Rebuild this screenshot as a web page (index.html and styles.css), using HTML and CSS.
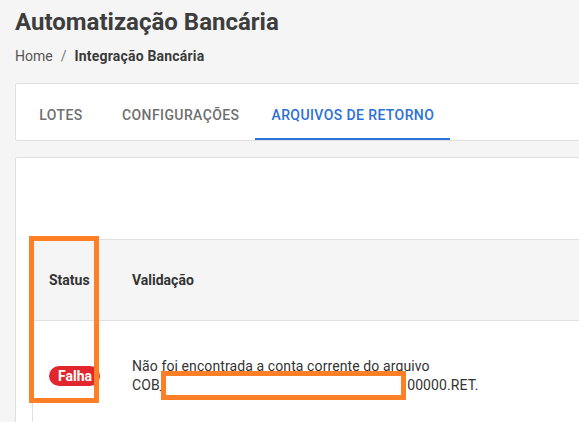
FILE: index.html
```html
<!DOCTYPE html>
<html lang="pt-BR">
<head>
<meta charset="utf-8">
<title>Automatização Bancária</title>
<link rel="stylesheet" href="styles.css">
</head>
<body>
<div class="page">
  <h1 class="title">Automatização Bancária</h1>
  <nav class="breadcrumb">
    <span class="crumb">Home</span>
    <span class="sep">/</span>
    <span class="crumb current">Integração Bancária</span>
  </nav>
  <div class="card tabs">
    <div class="tab">LOTES</div>
    <div class="tab">CONFIGURAÇÕES</div>
    <div class="tab active">ARQUIVOS DE RETORNO</div>
  </div>
  <div class="card content">
    <div class="toolbar"></div>
    <table class="grid">
      <thead>
        <tr>
          <th class="col-status">Status</th>
          <th>Validação</th>
        </tr>
      </thead>
      <tbody>
        <tr>
          <td class="col-status"><span class="badge">Falha</span></td>
          <td class="msg">Não foi encontrada a conta corrente do arquivo<br>COB_<span class="redact"></span>00000.RET.</td>
        </tr>
      </tbody>
    </table>
    <div class="mark-status"></div>
  </div>
</div>
</body>
</html>
```

FILE: styles.css
```css
html, body {
  margin: 0;
  padding: 0;
}
body {
  background: #f5f5f5;
  font-family: Roboto, "Noto Sans", "Liberation Sans", sans-serif;
  color: #333;
  overflow: hidden;
}
.page {
  width: 1000px;
  padding: 6px 15px 0;
}
.title {
  margin: 0;
  font-size: 24px;
  line-height: 32px;
  font-weight: 700;
  color: #3d3d3d;
}
.breadcrumb {
  margin-top: 8px;
  font-size: 14px;
  line-height: 20px;
  display: flex;
  gap: 8px;
}
.crumb { color: #555; }
.sep { color: #777; }
.crumb.current { font-weight: 700; color: #3a3a3a; letter-spacing: 0.2px; }

.card {
  background: #fff;
  border: 1px solid #e0e0e0;
  border-radius: 2px;
}
.tabs {
  margin-top: 17px;
  display: flex;
}
.tab {
  position: relative;
  min-width: 90px;
  box-sizing: border-box;
  padding: 21px 16px 15px;
  text-align: center;
  font-size: 14px;
  line-height: 20px;
  font-weight: 500;
  letter-spacing: 0.4px;
  color: #6f6f6f;
}
.tab.active { color: #2b70d6; }
.tab.active::after {
  content: "";
  position: absolute;
  left: 0;
  right: 0;
  bottom: 0;
  height: 2px;
  background: #2b72dc;
}
.content {
  position: relative;
  margin-top: 16px;
  padding: 16px;
  height: 400px;
}
.toolbar { height: 65px; }
.grid {
  border-collapse: collapse;
  width: 100%;
  border-left: 1px solid #e0e0e0;
  border-top: 1px solid #e0e0e0;
  font-size: 14px;
}
.grid th {
  background: #f5f5f5;
  height: 80px;
  padding: 0 16px;
  text-align: left;
  font-weight: 700;
  color: #333;
  border-bottom: 1px solid #e0e0e0;
}
.grid td {
  padding: 36px 16px;
  vertical-align: middle;
  line-height: 18.5px;
}
.col-status { width: 50px; }
.badge {
  display: inline-block;
  background: #e1262d;
  color: #fff;
  font-weight: 700;
  font-size: 14px;
  line-height: 20px;
  padding: 0 8px 0 9px;
  border-radius: 10px;
}
.msg { color: #333; font-size: 14px; letter-spacing: 0.1px; }
.redact {
  display: inline-block;
  position: relative;
  width: 241px;
  height: 14px;
}
.redact::after {
  content: "";
  position: absolute;
  left: -5px;
  right: 1px;
  top: -5px;
  height: 29px;
  box-sizing: border-box;
  border: 5px solid #ff7f27;
  background: #fff;
}
.mark-status {
  position: absolute;
  left: 13px;
  top: 78px;
  width: 70px;
  height: 167px;
  box-sizing: border-box;
  border: 5px solid #ff7f27;
}
```
